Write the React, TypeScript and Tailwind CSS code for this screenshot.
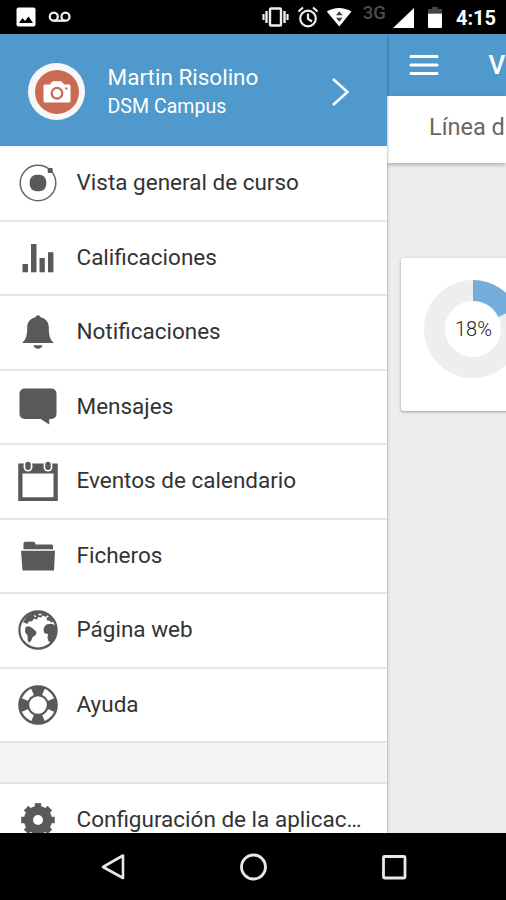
import React from 'react';

interface MenuRowProps {
  icon: React.ReactNode;
  label: string;
}

const IconBox: React.FC<{ children: React.ReactNode }> = ({ children }) => (
  <svg viewBox="0 0 40 40" className="w-10 h-10 shrink-0 overflow-visible" fill="#595959">
    {children}
  </svg>
);

const CourseIcon = () => (
  <IconBox>
    <circle cx="20" cy="20" r="17.8" fill="none" stroke="#666" strokeWidth="1.5" />
    <rect x="11.7" y="11.7" width="16.6" height="16.6" rx="7" />
    <rect x="29.7" y="5" width="5" height="5" rx="1" />
  </IconBox>
);

const GradesIcon = () => (
  <IconBox>
    <rect x="4.5" y="26" width="5.5" height="8.3" />
    <rect x="13" y="6" width="5.5" height="28.3" />
    <rect x="21.5" y="20" width="5.3" height="14.3" />
    <rect x="30" y="14.2" width="5.4" height="20.1" />
  </IconBox>
);

const BellIcon = () => (
  <IconBox>
    <path d="M20 3.2c1.3 0 2.2.8 2.5 2 5 1.2 8.3 4.5 8.3 10C30.8 23.5 32 27.5 36 31H4c4-3.5 5.2-7.5 5.2-15.8 0-5.5 3.3-8.8 8.3-10 .3-1.2 1.2-2 2.5-2z" />
    <path d="M15.5 33.2h9c-.5 2.2-2.2 3.5-4.5 3.5s-4-1.3-4.5-3.5z" />
  </IconBox>
);

const MessageIcon = () => (
  <IconBox>
    <path d="M6.5 1.5h27a5 5 0 0 1 5 5V27a5 5 0 0 1-5 5h-2.300v5.500L22.700 32H6.500a5 5 0 0 1-5-5V6.500a5 5 0 0 1 5-5z" />
  </IconBox>
);

const CalendarIcon = () => (
  <IconBox>
    <path fillRule="evenodd" d="M.2 2.500h39.600v37.500H.2zM4.500 12.600v23.600h31V12.600z" />
    {[10, 30].map((x) => (
      <g key={x}>
        <rect x={x - 4.4} y="-.4" width="8.8" height="11" rx="4.4" fill="#fff" />
        <rect x={x - 2.7} y=".8" width="5.400" height="8.200" rx="2.700" />
      </g>
    ))}
  </IconBox>
);

const FolderIcon = () => (
  <IconBox>
    <path d="M5.500 13.200V7.500q0-1.800 1.800-1.800h8.200q1.500 0 1.800 1.500l.3 1.400h16q1.400 0 1.400 1.400v3.200z" />
    <path d="M3 14.700h34L36 34.400H4.500z" />
  </IconBox>
);

const GlobeIcon = () => (
  <IconBox>
    <circle cx="20" cy="20" r="18.600" fill="none" stroke="#595959" strokeWidth="2.200" />
    <path d="M5 12.500C8 6 13 2 20 1.500c4 0 7.500 1 10 3l-2 2.600-3-1.600-2 2-3-.5-1 2.500-3-.8-2 2.500-3 .3-2 2.500-2-1.200z" />
    <path d="M7.500 17l3.500-.7 3.300 1.700 4.200 4-.8 3-3.200 2.200-1.200 3.300-2.300 2.500-1.300-3-.2-4.500-2.500-3.500z" />
    <path d="M26 17.500l2.200-3 4.500-.8 3.500 1 2.800 3.500c.3 6-2 11.500-5.800 14.300l-2.600-1-1.100-3.700.5-3.800-3.500-.8-1-2.500z" />
    <path d="M28.500 8l3-2 4 5.500-2.500 1-1.500-2-2 .5z" />
    <path d="M20.500 4.500h3M16 5.500l2 1.300" stroke="#fff" strokeWidth="1.300" fill="none" />
  </IconBox>
);

const HelpIcon = () => (
  <IconBox>
    <circle cx="20" cy="20" r="18.600" fill="#fff" stroke="#595959" strokeWidth="2.400" />
    <circle
      cx="20"
      cy="20"
      r="14"
      fill="none"
      stroke="#595959"
      strokeWidth="9.500"
      pathLength="8"
      strokeDasharray="1 1"
      strokeDashoffset="0.500"
    />
    <circle cx="20" cy="20" r="9.800" fill="#fff" stroke="#595959" strokeWidth="2" />
  </IconBox>
);

const GearIcon = () => (
  <IconBox>
    {[0, 45, 90, 135, 180, 225, 270, 315].map((deg) => (
      <path key={deg} d="M16.800 9V3.200h6.400V9z" transform={`rotate(${deg} 20 20)`} />
    ))}
    <circle cx="20" cy="20" r="9.500" fill="none" stroke="#595959" strokeWidth="9" />
  </IconBox>
);

const items: MenuRowProps[] = [
  { icon: <CourseIcon />, label: 'Vista general de curso' },
  { icon: <GradesIcon />, label: 'Calificaciones' },
  { icon: <BellIcon />, label: 'Notificaciones' },
  { icon: <MessageIcon />, label: 'Mensajes' },
  { icon: <CalendarIcon />, label: 'Eventos de calendario' },
  { icon: <FolderIcon />, label: 'Ficheros' },
  { icon: <GlobeIcon />, label: 'Página web' },
  { icon: <HelpIcon />, label: 'Ayuda' },
];

const MenuRow: React.FC<MenuRowProps> = ({ icon, label }) => (
  <button className="flex items-center w-full h-[74.5px] shrink-0 pl-[18.4px] gap-[18.1px] bg-white border-b-2 border-[#e6e6e6] text-left">
    {icon}
    <span className="-mt-[2px] text-[22.5px] leading-7 text-[#333] whitespace-nowrap">{label}</span>
  </button>
);

const StatusBar = () => (
  <div className="flex items-center justify-between h-[34px] shrink-0 bg-black pl-4 pr-[10px]">
    <div className="flex items-center gap-[12px]">
      <svg viewBox="0 0 20 20" className="w-5 h-5">
        <rect x=".5" y=".5" width="19" height="19" rx="2" fill="#fff" />
        <path d="M3 16l3.500-5 2.500 3 3.500-4.500L17 16z" fill="#000" />
      </svg>
      <svg viewBox="0 0 24 12" className="w-6 h-3" fill="none" stroke="#f0f0f0" strokeWidth="2.300">
        <circle cx="5.800" cy="5.700" r="4" />
        <circle cx="17.500" cy="5.700" r="4" />
        <path d="M5.800 9.700h11.700" />
      </svg>
    </div>
    <div className="flex items-center">
      <svg viewBox="0 0 28 22" className="w-7 h-[22px]" fill="none" stroke="#eee">
        <rect x="9" y="2.500" width="11" height="17" rx="1" strokeWidth="2.400" />
        <path d="M5.500 5v12M23.500 5v12" strokeWidth="2.400" />
        <path d="M2.500 8v6M26.500 8v6" strokeWidth="2.200" />
      </svg>
      <svg viewBox="0 0 22 22" className="w-[22px] h-[22px] ml-[7px]" fill="none" stroke="#eee" strokeWidth="2.200">
        <circle cx="12" cy="12.500" r="7.800" />
        <path d="M12 7.500V13l4 2.500M2.500 5.500l4.500-4M21.500 5.500l-4.500-4" />
      </svg>
      <svg viewBox="0 0 26 20" className="w-[26px] h-5 ml-[8px]" fill="#fff">
        <path d="M.8 4.500C8-.2 18-.2 25.500 4.500L13.300 19.500z" />
        <path d="M9.900 8.300l3.400-4 3.400 4zM9.900 10.800h6.800l-3.400 4z" fill="#444" />
      </svg>
      <span className="ml-[11px] -mt-[8px] text-[18.5px] leading-5 font-medium text-[#4d4d4d]">3G</span>
      <svg viewBox="0 0 21 20" className="w-[21px] h-5 ml-[7px] mt-[2px]" fill="#fff">
        <path d="M21 0v20H0z" />
      </svg>
      <svg viewBox="0 0 14 21" className="w-[14px] h-[21px] ml-[14px]">
        <path d="M4 0h6v2h4v4H0V2h4z" fill="#444" />
        <path d="M0 6.500h14V20q0 1-1 1H1q-1 0-1-1z" fill="#fff" />
      </svg>
      <span className="ml-[14px] mt-[2px] text-[20px] leading-6 font-bold text-white">4:15</span>
    </div>
  </div>
);

const ProfileHeader = () => (
  <div className="flex items-center h-[112px] shrink-0 pl-7 pr-[37px] bg-[#5099cd] text-white">
    <div className="flex items-center justify-center w-[57px] h-[57px] mt-[3px] rounded-full bg-[#f7f7f7]">
      <div className="flex items-center justify-center w-[44px] h-[44px] rounded-full bg-[#ca6c53]">
        <svg viewBox="0 0 28 22" className="w-7 h-[22px]">
          <path d="M2 3.500h5L8.800 1Q9.300.2 10.300.2h7.400q1 0 1.500.8L21 3.500h5q1.500 0 1.500 1.500v15q0 1.500-1.500 1.500H2Q.5 21.500.5 20V5Q.5 3.500 2 3.500z" fill="#fff" />
          <circle cx="14" cy="12.200" r="5.300" fill="none" stroke="#ca6c53" strokeWidth="2.300" />
          <circle cx="23.300" cy="7.500" r="1.200" fill="#ca6c53" />
        </svg>
      </div>
    </div>
    <div className="flex-1 ml-[22.5px] mt-[3px]">
      <div className="text-[22.5px] leading-[29px]">Martin Risolino</div>
      <div className="text-[19.5px] leading-[29px] tracking-[0.05px]">DSM Campus</div>
    </div>
    <svg viewBox="0 0 20 30" className="w-5 h-[30px] mt-[4px]" fill="none" stroke="#fff" strokeWidth="2.500">
      <path d="M3 2l14.500 13L3 28" />
    </svg>
  </div>
);

const SideMenu = () => (
  <aside className="relative z-10 flex flex-col w-[387px] shrink-0 bg-white shadow-[0_0_3px_rgba(0,0,0,0.4)]">
    <ProfileHeader />
    <div className="flex flex-col flex-1 min-h-0 pt-px overflow-hidden">
      {items.map((item) => (
        <MenuRow key={item.label} {...item} />
      ))}
      <div className="h-[41px] shrink-0 bg-[#f4f4f4] border-b-2 border-[#e6e6e6]" />
      <MenuRow icon={<GearIcon />} label="Configuración de la aplicac…" />
    </div>
  </aside>
);

const CoursePage = () => (
  <section className="flex-1 min-w-0 overflow-hidden bg-[#ededed]">
    <div className="flex items-center h-[62px] pl-[22px] bg-[#5099cd] text-white">
      <svg viewBox="0 0 30 24" className="w-[30px] h-6 shrink-0" stroke="#fff" strokeWidth="3.200" strokeLinecap="round">
        <path d="M2 3.500h26M2 12h26M2 20.500h26" />
      </svg>
      <span className="ml-[49.5px] text-[26px] leading-8 font-medium">V</span>
    </div>
    <div className="flex items-center h-[67px] pl-[42px] bg-white shadow-[0_2px_4px_rgba(0,0,0,0.25)]">
      <span className="-mt-[3px] text-[23.5px] text-[#666] whitespace-nowrap">Línea d</span>
    </div>
    <div className="mt-[95px] ml-[14px] w-[300px] h-[153px] pl-[23px] pt-[22px] rounded-[3px] bg-white shadow-[0_1px_3px_rgba(0,0,0,0.35)]">
      <svg viewBox="0 0 98 98" className="w-[98px] h-[98px]">
        <circle cx="49" cy="49" r="38.500" fill="none" stroke="#eee" strokeWidth="21" />
        <circle
          cx="49"
          cy="49"
          r="38.500"
          fill="none"
          stroke="#75aedb"
          strokeWidth="21"
          pathLength="100"
          strokeDasharray="18 82"
          transform="rotate(-90 49 49)"
        />
        <text x="49.5" y="56" textAnchor="middle" fontSize="20" fontWeight="300" fill="#222">18%</text>
      </svg>
    </div>
  </section>
);

const NavBar = () => (
  <nav className="flex justify-center items-center gap-[113px] h-[67px] shrink-0 bg-black">
    <svg viewBox="0 0 28 28" className="w-7 h-7" fill="none" stroke="#e8e8e8" strokeWidth="2.600" strokeLinejoin="round">
      <path d="M25 2.500v22.500L5 14z" />
    </svg>
    <svg viewBox="0 0 28 28" className="w-7 h-7" fill="none" stroke="#e8e8e8" strokeWidth="2.800">
      <circle cx="14.500" cy="14" r="12" />
    </svg>
    <svg viewBox="0 0 28 28" className="w-7 h-7" fill="none" stroke="#e8e8e8" strokeWidth="2.800">
      <rect x="3.500" y="3.500" width="21.500" height="21.500" rx="1" />
    </svg>
  </nav>
);

export default function App() {
  return (
    <div className="flex flex-col w-[506px] h-[900px] overflow-hidden bg-black font-['Roboto',sans-serif]">
      <StatusBar />
      <div className="flex flex-1 min-h-0 overflow-hidden">
        <SideMenu />
        <CoursePage />
      </div>
      <NavBar />
    </div>
  );
}
